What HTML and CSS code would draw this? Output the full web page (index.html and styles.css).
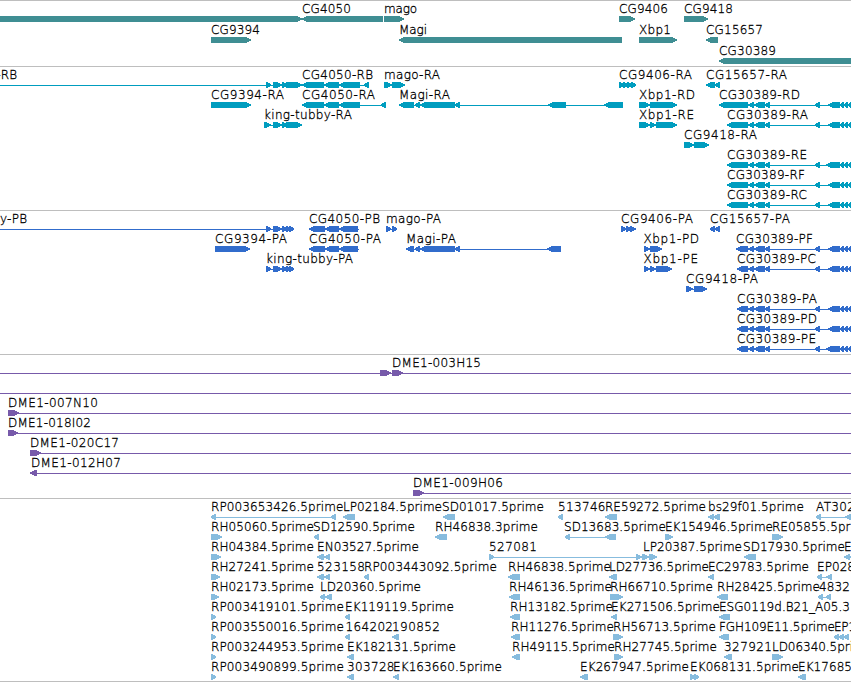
FILE: index.html
```
<!DOCTYPE html>
<html>

<head>
	<meta charset="utf-8">
	<title>Genome Browser</title>
	<link rel="stylesheet" href="styles.css">
</head>

<body>
	<div id="browser">
		<svg class="track genes" id="genes"></svg>
		<svg class="track transcripts" id="transcripts"></svg>
		<svg class="track cds" id="cds"></svg>
		<svg class="track bacs" id="bacs"></svg>
		<svg class="track ests" id="ests"></svg>
	</div>

	<script src="script.js"></script>
</body>

</html>
```
FILE: styles.css
```
body {
	margin: 0;
	padding: 0;
	background-color: #ffffff;
	font-family: "DejaVu Sans", sans-serif;
	font-size: 12px;
	font-weight: 200;
}

#browser {
	display: flex;
	flex-direction: column;
	width: 851px;
	height: 681px;
	overflow: hidden;
	border-bottom: 1px solid #bebebe;
}

.track {
	display: block;
	box-sizing: border-box;
	width: 100%;
	height: 144px;
	flex: none;
	overflow: hidden;
	border-top: 1px solid #bebebe;
}

.track text {
	fill: #000000;
	stroke: #000000;
	stroke-width: 0.3px;
}

.track polygon,
.track rect {
	shape-rendering: crispEdges;
}

.genes {
	height: 66px;
	fill: #3f8e93;
}

.transcripts {
	fill: #009dbf;
}

.cds {
	fill: #316ccc;
}

.bacs {
	fill: #775aaa;
}

.ests {
	height: 183px;
	fill: #87bcde;
}
```
FILE: script.js
```
// feature: [row, label, label start, label end, strand, blocks, line]
// blocks are "start-end" pairs, line is the span of the connecting line

var tail = " 748-754 754-765 765-770 814.5-820 828-840 840-844 844-848 848-852";
var tailE = tail.replace("828", "826");

var genes = [
	[0, "", 0, 0, ">", "0-302"],
	[0, "CG4050", 302, 351, "<", "302-383"],
	[0, "mago", 384, 417, ">", "384-404"],
	[0, "CG9406", 619, 668, ">", "619-635"],
	[0, "CG9418", 684, 733, ">", "684-708"],
	[1, "CG9394", 211, 260, ">", "211-251"],
	[1, "Magi", 399, 427, "<", "399-622"],
	[1, "Xbp1", 639, 671, ">", "639-677"],
	[1, "CG15657", 706, 763, "<", "706-718"],
	[2, "CG30389", 719, 776, "<", "719-860"]
];

var transcripts = [
	[0, "king-tubby-RB", -69, 17, ">", "266-271 273-282 282-287 286-290 288-302", "0-302"],
	[0, "CG4050-RB", 302, 373, "<", "302-324 324-339 339-360 364-369", "302-369"],
	[0, "mago-RA", 384, 440, ">", "384-391.5 392-405", "384-405"],
	[0, "CG9406-RA", 619, 692, ">", "619-624 623-628 627-632 631-636", "619-636"],
	[0, "CG15657-RA", 706, 787, "<", "706-715 714-720", "706-720"],
	[1, "CG9394-RA", 211, 284, ">", "211-251"],
	[1, "CG4050-RA", 302, 375, "<", "302-324 324-339 339-360 381-386", "302-386"],
	[1, "Magi-RA", 399, 450, "<", "399-414 415-420 420-455 455-460 548-566 604-623", "399-623"],
	[1, "Xbp1-RD", 639, 695, ">", "639-650 650-677", "639-677"],
	[1, "CG30389-RD", 719, 800, "<", "719-748" + tail, "719-851"],
	[2, "king-tubby-RA", 264, 352, ">", "264-271 273-282 282-287 286-290 288-302", "264-302"],
	[2, "Xbp1-RE", 639, 694, ">", "639-650 650-656 656-677", "639-677"],
	[2, "CG30389-RA", 727, 808, "<", "727-748" + tail, "727-851"],
	[3, "CG9418-RA", 684, 757, ">", "684-693.5 694-709", "684-709"],
	[4, "CG30389-RE", 727, 807, "<", "727-748" + tailE, "727-851"],
	[5, "CG30389-RF", 727, 805, "<", "727-748" + tail, "727-851"],
	[6, "CG30389-RC", 727, 807, "<", "727-748" + tail, "727-851"]
];

var cds = [
	[0, "king-tubby-PB", -59, 27, ">", "266-271 273-282 282-287 286-290 289-294", "0-294"],
	[0, "CG4050-PB", 309, 380, "<", "309-325 325-339 339-358", "309-359"],
	[0, "mago-PA", 386, 441, ">", "386-391 392-397", "386-397"],
	[0, "CG9406-PA", 621, 693, ">", "621-626 626-631 630-636", "621-636"],
	[0, "CG15657-PA", 710, 790, "<", "710-715 715-720", "710-720"],
	[1, "CG9394-PA", 215, 287, ">", "215-250"],
	[1, "CG4050-PA", 309, 381, "<", "309-325 325-339 339-358", "309-359"],
	[1, "Magi-PA", 406, 456, "<", "406-414 415-420 420-455 455-460 547-561", "406-561"],
	[1, "Xbp1-PD", 643.5, 699, ">", "644-650 650-662", "644-662"],
	[1, "CG30389-PF", 736, 813, "<", "736-748" + tail, "736-851"],
	[2, "king-tubby-PA", 266, 353, ">", "266-271 273-282 282-287 286-290 289-294", "266-294"],
	[2, "Xbp1-PE", 643.5, 698, ">", "644-650 650-656 656-672", "644-672"],
	[2, "CG30389-PC", 737, 816, "<", "737-748" + tail, "737-851"],
	[3, "CG9418-PA", 686, 758, ">", "686-693 694-707", "686-707"],
	[4, "CG30389-PA", 737, 817, "<", "737-748" + tail, "737-851"],
	[5, "CG30389-PD", 737, 817, "<", "737-748" + tail, "737-851"],
	[6, "CG30389-PE", 737, 816, "<", "737-748" + tailE, "737-851"]
];

var bacs = [
	[0, "DME1-003H15", 392, 481, ">", "380-391 392-403", "0-851"],
	[1, "", 0, 0, ">", "", "0-851"],
	[2, "DME1-007N10", 8, 98, ">", "8-19", "8-851"],
	[3, "DME1-018I02", 8, 91, ">", "8-18", "8-851"],
	[4, "DME1-020C17", 30, 119, ">", "30-41", "30-851"],
	[5, "DME1-012H07", 31, 121, "<", "30-37", "31-851"],
	[6, "DME1-009H06", 413, 503, ">", "413-424", "413-851"]
];

var ests = [
	[0, "RP003653426.5prime", 211, 343.5, "<", "211-216 331-336", "211-336"],
	[0, "LP02184.5prime", 343, 442, "<", "343-355"],
	[0, "SD01017.5prime", 442, 544, "<", "443-455"],
	[0, "513746", 558, 605.5, "<", "558-563"],
	[0, "RE59272.5prime", 605, 706, "<", "605-617"],
	[0, "bs29f01.5prime", 708, 804, "<", "708-714 713-720"],
	[0, "AT302", 816, 855, "<", "816-821 845-857", "816-851"],
	[1, "RH05060.5prime", 211, 314, ">", "211-222"],
	[1, "SD12590.5prime", 313, 415, "<", "314-319"],
	[1, "RH46838.3prime", 435, 538, "<", "435-447"],
	[1, "SD13683.5prime", 564, 666, "<", "565-570 605-616", "565-616"],
	[1, "EK154946.5prime", 665, 773, ">", "665-673"],
	[1, "RE05855.5prime", 772, 873, ">", "772-783"],
	[2, "RH04384.5prime", 211, 314, ">", "211-221"],
	[2, "EN03527.5prime", 317, 419, "<", "317-324 324-330"],
	[2, "527081", 489, 537, ">", "489-494 636-642 642-649 649-657", "489-657"],
	[2, "LP20387.5prime", 643, 742, ">", ""],
	[2, "SD17930.5prime", 743, 845, "<", "744-756"],
	[2, "E", 844, 851, "<", "844-850 849-856"],
	[3, "RH27241.5prime", 211, 314, ">", "211-220"],
	[3, "523158", 317, 365, "<", "317-324 324-330"],
	[3, "RP003443092.5prime", 364, 497, "<", "364-369"],
	[3, "RH46838.5prime", 508, 611, "<", "508-520"],
	[3, "LD27736.5prime", 609, 709, "<", "609-617"],
	[3, "EC29783.5prime", 708, 809, "<", "708-714"],
	[3, "EP028", 817, 855, "<", "817-822 826-832", "817-832"],
	[4, "RH02173.5prime", 211, 314, ">", "211-219"],
	[4, "LD20360.5prime", 320, 421, "<", "320-325 325-332"],
	[4, "RH46136.5prime", 509, 612, "<", "509-520"],
	[4, "RH66710.5prime", 610, 713, ">", "610-623"],
	[4, "RH28425.5prime", 717, 820, "<", "717-728"],
	[4, "4832", 819, 850, "<", "818-823 826-831", "818-831"],
	[5, "RP003419101.5prime", 211, 344, ">", "211-216"],
	[5, "EK119119.5prime", 345, 454, "<", "345-350"],
	[5, "RH13182.5prime", 510, 613, "<", "510-520"],
	[5, "EK271506.5prime", 611, 720, "<", "611-617"],
	[5, "ESG0119d.B21_A05.3", 719, 850, "<", "719-730"],
	[6, "RP003550016.5prime", 211, 344, ">", "211-216"],
	[6, "164202", 345.5, 393, "<", "345-350"],
	[6, "190852", 392, 440, "<", "392-399"],
	[6, "RH11276.5prime", 511, 614, "<", "511-520"],
	[6, "RH56713.5prime", 613, 716, ">", "613-623"],
	[6, "FGH109E11.5prime", 719, 835, "<", "719-729"],
	[6, "EP1", 834, 856, "<", "834-839 839-844 844-849"],
	[7, "RP003244953.5prime", 211, 344, ">", "211-216"],
	[7, "EK182131.5prime", 347, 456, "<", "347-354"],
	[7, "RH49115.5prime", 512, 615, "<", "512-520"],
	[7, "RH27745.5prime", 614, 717, ">", "614-623"],
	[7, "327921", 724, 772, "<", "724-732"],
	[7, "LD06340.5prime", 772, 872, ">", "772-783"],
	[8, "RP003490899.5prime", 211, 344, ">", "211-216"],
	[8, "303728", 347, 394.5, "<", "347-354"],
	[8, "EK163660.5prime", 393, 502, "<", "393-399"],
	[8, "EK267947.5prime", 580, 689, "<", "580-588"],
	[8, "EK068131.5prime", 690, 799, ">", "690-695 694-699"],
	[8, "EK17685", 798, 852, "<", "798-806"]
];

function addShape(svg, name, attrs) {
	var el = document.createElementNS("http://www.w3.org/2000/svg", name);
	for (var key in attrs) {
		el.setAttribute(key, attrs[key]);
	}
	svg.appendChild(el);
	return el;
}

function drawBlock(svg, start, end, strand, y) {
	var width = end - start;
	var dir = strand == ">" ? 1 : -1;
	var flat = strand == ">" ? start : end;
	var tip = strand == ">" ? end : start;
	// short blocks are nearly all arrow head
	var neck = tip - dir * Math.min(5, width - 1);
	var points = [flat, y, neck, y, tip, y + 2.3, tip, y + 3.7, neck, y + 6, flat, y + 6];
	addShape(svg, "polygon", { points: points.join(" ") });
}

function drawTrack(id, features, rowHeight) {
	var svg = document.getElementById(id);
	features.forEach(function (f) {
		var top = f[0] * rowHeight;
		if (f[6]) {
			var line = f[6].split("-").map(Number);
			addShape(svg, "rect", { x: line[0], y: top + 18, width: line[1] - line[0], height: 1 });
		}
		if (f[5]) {
			f[5].split(" ").forEach(function (block) {
				var b = block.split("-").map(Number);
				drawBlock(svg, b[0], b[1], f[4], top + 15);
			});
		}
		if (f[1]) {
			var text = addShape(svg, "text", { x: f[2], y: top + 12, textLength: f[3] - f[2] });
			text.textContent = f[1];
		}
	});
}

drawTrack("genes", genes, 21);
drawTrack("transcripts", transcripts, 20);
drawTrack("cds", cds, 20);
drawTrack("bacs", bacs, 20);
drawTrack("ests", ests, 20);
```
